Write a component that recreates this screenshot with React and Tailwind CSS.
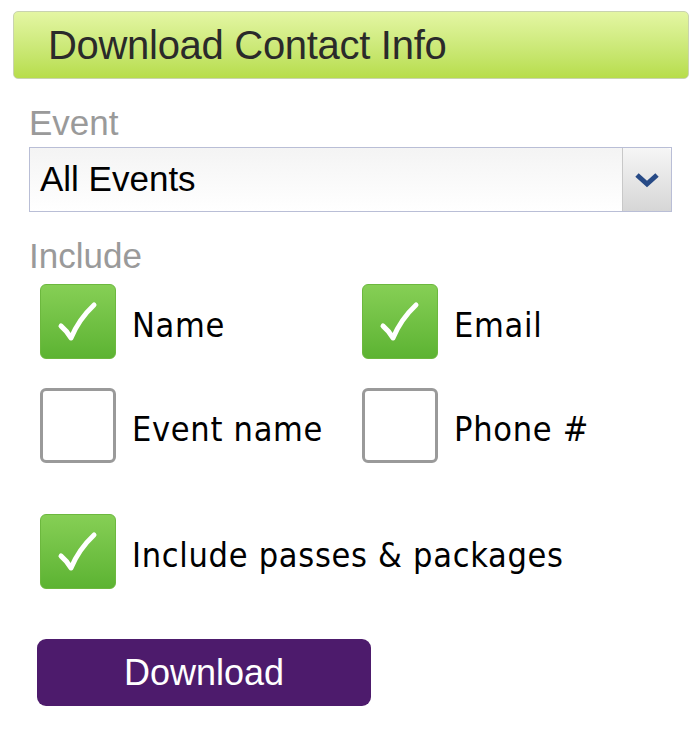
import React, { useState } from "react";

function Check({ checked }) {
  return checked ? (
    <div className="w-[76px] h-[75px] rounded-[6px] border border-[#6cb83e] bg-gradient-to-b from-[#86cf55] to-[#5cb332] flex items-center justify-center shrink-0">
      <svg width="46" height="46" viewBox="0 0 46 46">
        <path d="M6 27 Q12 32 16 39 Q24 20 39 6" fill="none" stroke="white" strokeWidth="5" strokeLinecap="round" strokeLinejoin="round" />
      </svg>
    </div>
  ) : (
    <div className="w-[76px] h-[75px] rounded-[6px] border-[3px] border-[#9a9a9a] bg-white shrink-0" />
  );
}

function Option({ label, checked, onClick }) {
  return (
    <div className="flex items-center gap-[16px] cursor-pointer" onClick={onClick}>
      <Check checked={checked} />
      <span className="mt-[7px] text-[34px] leading-[40px] tracking-[0.7px] text-black font-['DejaVu_Sans_Condensed','DejaVu_Sans',sans-serif]">{label}</span>
    </div>
  );
}

export default function App() {
  const [opts, setOpts] = useState({ name: true, email: true, event: false, phone: false, passes: true });
  const toggle = (k) => setOpts((p) => ({ ...p, [k]: !p[k] }));

  return (
    <div className="w-[700px] h-[736px] bg-white font-['Liberation_Sans',Arial,sans-serif]">
      <div className="pt-[11px] px-[13px] pr-[11px]">
        <div className="h-[68px] rounded-[5px] border border-[#c9d3b0] bg-gradient-to-b from-[#e4f6a3] to-[#b7dd4a] flex items-center pl-[34px]">
          <span className="text-[40px] text-[#2a2a2a] tracking-[-0.3px]">Download Contact Info</span>
        </div>
      </div>

      <div className="pl-[29px] pr-[28px]">
        <div className="text-[35px] text-[#9a9a9a] mt-[24px] leading-[40px]">Event</div>
        <div className="mt-[4px] h-[65px] border border-[#b9bed6] flex">
          <div className="flex-1 flex items-center pl-[10px] text-[35px] text-black bg-gradient-to-b from-[#f4f4f4] to-white">All Events</div>
          <div className="w-[49px] border-l border-[#c8c8c8] rounded-tr-[4px] bg-gradient-to-b from-[#f6f6f6] to-[#d6d6d6] flex items-center justify-center">
            <svg width="24" height="16" viewBox="0 0 24 16">
              <path d="M2 3 L12 12 L22 3" fill="none" stroke="#274a86" strokeWidth="5" strokeLinejoin="miter" />
            </svg>
          </div>
        </div>

        <div className="text-[35px] text-[#9a9a9a] mt-[24px] leading-[40px]">Include</div>

        <div className="pl-[11px] mt-[8px] grid grid-cols-[322px_1fr] gap-y-[29px]">
          <Option label="Name" checked={opts.name} onClick={() => toggle("name")} />
          <Option label="Email" checked={opts.email} onClick={() => toggle("email")} />
          <Option label="Event name" checked={opts.event} onClick={() => toggle("event")} />
          <Option label="Phone #" checked={opts.phone} onClick={() => toggle("phone")} />
        </div>

        <div className="pl-[11px] mt-[51px]">
          <Option label="Include passes & packages" checked={opts.passes} onClick={() => toggle("passes")} />
        </div>

        <button className="mt-[50px] ml-[8px] w-[334px] h-[67px] rounded-[9px] bg-[#4d1b6c] text-white text-[36px] flex items-center justify-center">
          Download
        </button>
      </div>
    </div>
  );
}
